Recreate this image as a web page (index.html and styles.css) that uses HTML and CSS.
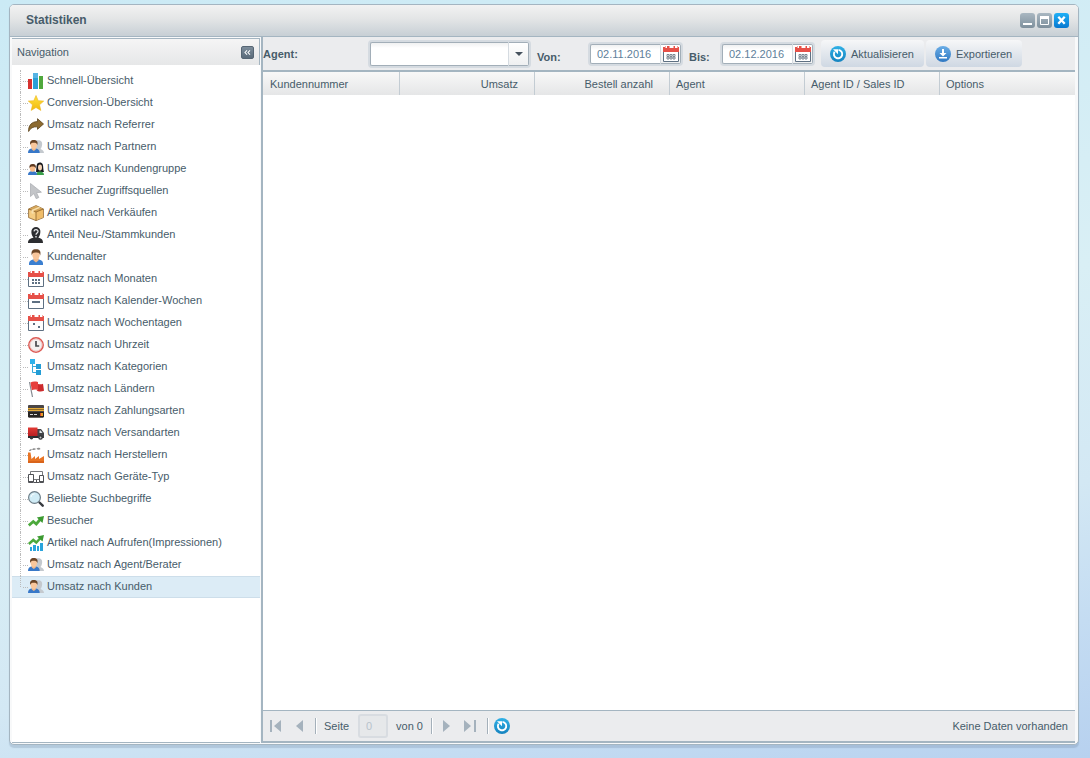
FILE: index.html
```html
<!DOCTYPE html>
<html lang="de">
<head>
<meta charset="utf-8">
<title>Statistiken</title>
<link rel="stylesheet" href="styles.css">
</head>
<body>
<svg class="sprite" aria-hidden="true">
  <defs>
    <linearGradient id="g-blue" x1="0" y1="0" x2="0" y2="1"><stop offset="0" stop-color="#2fb0e6"/><stop offset="1" stop-color="#1583bf"/></linearGradient>
    <linearGradient id="g-export" x1="0" y1="0" x2="0" y2="1"><stop offset="0" stop-color="#6aade6"/><stop offset="1" stop-color="#2f78c2"/></linearGradient>
    <linearGradient id="g-star" x1="0" y1="0" x2="0" y2="1"><stop offset="0" stop-color="#ffe240"/><stop offset="1" stop-color="#f2b90c"/></linearGradient>
    <linearGradient id="g-red" x1="0" y1="0" x2="0" y2="1"><stop offset="0" stop-color="#e23a35"/><stop offset="1" stop-color="#b81f22"/></linearGradient>
  </defs>
  <symbol id="i-bars" viewBox="0 0 16 16"><path fill="#d63230" d="M0 6h4v10H0z"/><path fill="#2a9fd8" d="M5 0h5v16H5z"/><path fill="#56b4e4" d="M5 0h5v5H5z"/><path fill="#4fa83d" d="M11 3h4v13h-4z"/></symbol>
  <symbol id="i-star" viewBox="0 0 16 16"><path fill="url(#g-star)" stroke="#edb51c" stroke-width=".6" d="M8 .5l2.200 5.200 5.500.4-4.200 3.700 1.300 5.600L8 12.500l-4.800 2.900 1.300-5.600L.3 6.100l5.500-.4z"/></symbol>
  <symbol id="i-share" viewBox="0 0 16 16"><path fill="#8c6a2f" stroke="#5c431a" stroke-width=".8" d="M.6 14.500C.3 8 4 4.600 9.500 4.600V1.700l6 5.300-6 5.300V9.800C5 9.600 2.500 11 .6 14.500z"/></symbol>
  <symbol id="i-user" viewBox="0 0 16 16"><path fill="#3b7fd0" d="M1 16c-.4-3 1-5 4-5.500h6c3 .5 4.500 2.500 4 5.500z"/><path fill="#f0b889" d="M5.500 9h5v2.500L8 13.500l-2.500-2z"/><ellipse cx="8" cy="6" rx="3.700" ry="4.600" fill="#f8c59a"/><path fill="#6b4526" d="M3.800 6.500C2.800 2 4.500.2 8 .2S13.300 2 12.200 6.500C11.700 4.200 11 3.500 8 3.500s-3.700.7-4.200 3z"/></symbol>
  <symbol id="i-users" viewBox="0 0 16 16"><path fill="#c4c9ce" d="M7 2.500C8 1 13 .5 14 3.500c.5 2-.2 5-1.500 6.500 2 .8 3.500 2 3.500 4H9z"/><path fill="#3878c8" d="M0 14c0-2.500 1-4 3.500-4.500h4.500c2.500.5 3.700 2 3.700 4.500z"/><path fill="#f0b889" d="M3.800 8.500h4v2L5.800 12l-2-1.500z"/><ellipse cx="5.800" cy="5.800" rx="3.200" ry="4.100" fill="#f9c79c"/><path fill="#6b4526" d="M2.300 6C1.500 2.500 2.800 1 5.800 1s4.500 1.500 3.500 5C8.900 4.200 8 3.700 5.800 3.700S2.800 4.200 2.300 6z"/></symbol>
  <symbol id="i-group" viewBox="0 0 16 16"><path fill="#16181c" d="M8 11c.5-2 0-8 2-9 1.500-1 4-.6 4.600 1C15.500 5 15 9 16 11z"/><path fill="#3aa04a" d="M8 14c.3-2.500 1.500-3.600 4-3.600s4 1.200 4 3.600z"/><ellipse cx="12" cy="6.500" rx="2" ry="3" fill="#f5d3b5"/><path fill="#3878c8" d="M0 14c0-2 1-3.300 3-3.700h3c2 .4 3 1.700 3 3.700z"/><ellipse cx="4.600" cy="7.600" rx="2.700" ry="3.200" fill="#f9bd8b"/><path fill="#5e3a20" d="M1.500 7.500C1 4.300 2.200 3 4.600 3s3.900 1.300 3.200 4.500C7.300 6 6.500 5.600 4.600 5.600S2 6 1.500 7.500z"/></symbol>
  <symbol id="i-cursor" viewBox="0 0 16 16"><path fill="#c3c5c8" stroke="#a6a9ad" stroke-width=".7" d="M2.500.5v13l3.400-2.900 2.300 5.100 2.600-1.200-2.300-4.800 4.900-.5z"/></symbol>
  <symbol id="i-box" viewBox="0 0 16 16"><path fill="#f5cd83" stroke="#8b5f27" stroke-width=".8" d="M.6 4L8 .6 15.400 4v8.600L8 15.600.6 12.600z"/><path fill="#efbd6b" d="M8 7l7-2.700v8L8 15.200z"/><path fill="#d3a458" d="M.8 4.200L8 7l7.200-2.800L8 1z"/><path fill="none" stroke="#8b5f27" stroke-width=".8" d="M.6 4L8 7l7.400-3M8 7v8.500"/><path fill="#f8e0ad" d="M10.500 1.900L3.500 5v3.200l2 .8V5.800l7-3z"/></symbol>
  <symbol id="i-unknown" viewBox="0 0 16 16"><path fill="#2c2d30" d="M0 16c0-3 1.500-4.500 5.500-5.300C3.800 8.500 3 6 3.500 3.500 4.200 1.200 5.700 0 8 0s3.800 1.200 4.300 3.500c.3 2.500-.3 5-1.900 7.200 3.600.8 4.600 2.300 4.600 5.300z"/><path fill="none" stroke="#e3e4e6" stroke-width="1.300" d="M6 4.300c.3-2.300 4.200-2 4 .2C9.900 6 8 6 8 7.800"/><path fill="#e3e4e6" d="M7.300 9h1.400v1.400H7.300z"/></symbol>
  <symbol id="i-cal" viewBox="0 0 16 16"><path fill="#fff" stroke="#5e7082" d="M.5 3.500h15v12H.5z"/><path fill="#e65048" d="M0 1h2v1h2V0h2v2h4V0h2v2h2V1h2v5H0z"/><path fill="#f6a69f" d="M2 0h1v2H2zM6 0h1v2H6zM10 0h1v2h-1zM14 0h1v2h-1z"/></symbol>
  <symbol id="i-month" viewBox="0 0 16 16"><use href="#i-cal"/><path fill="#5e7082" d="M4 8h2v2H4zM7 8h2v2H7zM10 8h2v2h-2zM4 11h2v2H4zM7 11h2v2H7zM10 11h2v2h-2z"/></symbol>
  <symbol id="i-week" viewBox="0 0 16 16"><use href="#i-cal"/><path fill="#5e7082" d="M4 8h8v2H4z"/></symbol>
  <symbol id="i-day" viewBox="0 0 16 16"><use href="#i-cal"/><path fill="#5e7082" d="M5 8h2v2H5zM10 11h2v2h-2z"/></symbol>
  <symbol id="i-picker" viewBox="0 0 16 16"><use href="#i-cal"/><path fill="none" stroke="#7d8893" stroke-width="1" d="M4 8.500h2v2H4zM7 8.500h2v2H7zM10 8.500h2v2h-2zM4 11h2v2H4zM7 11h2v2H7zM10 11h2v2h-2z"/></symbol>
  <symbol id="i-clock" viewBox="0 0 16 16"><circle cx="8" cy="8" r="7.200" fill="#f3f0f0" stroke="#dc5a54" stroke-width="1.500"/><circle cx="8" cy="8" r="6" fill="none" stroke="#efb5b1" stroke-width=".7"/><path fill="none" stroke="#47494e" stroke-width="1.700" d="M8 4v5h3.200"/></symbol>
  <symbol id="i-tree" viewBox="0 0 16 16"><path fill="#2fb2ea" d="M2 0h5v5H2z"/><path fill="#249dd5" d="M8 5h5v5H8zM8 11h5v5H8z"/><path fill="none" stroke="#36abdc" d="M4.500 5v8.500H8M4.500 7.500H8"/></symbol>
  <symbol id="i-flag" viewBox="0 0 16 16"><path stroke="#848a91" stroke-width="1.200" d="M1.500 1l3 15"/><path fill="#e6403d" d="M2.500 1.500C4.500.2 7 .2 10 .9V9C7.500 8.300 5.300 8.500 3.800 9.300z"/><path fill="#cc2a2c" d="M10 3c2 .6 3.700.4 5-.2l1 7c-2 1-4.500 1-6.500.2L8.300 8.700l1.700.3z"/></symbol>
  <symbol id="i-card" viewBox="0 0 16 16"><rect y="2" width="16" height="12.500" rx="1" fill="#4a4646"/><path fill="#262423" d="M0 9h16v4.500l-1 1H1l-1-1z"/><path fill="#e5ab37" d="M0 5h16v1H0zM0 7h16v1H0z"/><path fill="#8f6a26" d="M0 6h16v1H0z"/><path fill="#d9d9d9" d="M2 11h3v1H2zM6 11h3v1H6z"/><path fill="#e99b24" d="M12 10h3v3h-3z"/><path fill="#d8452c" d="M12 10h1v3h-1z"/></symbol>
  <symbol id="i-truck" viewBox="0 0 16 16"><path fill="#414347" d="M9 4h4l3 4v5H9z"/><path fill="#dfe4e8" d="M11.500 5.500h1.200L14.500 8h-3z"/><path fill="url(#g-red)" d="M0 2.500h9.500V11H0z"/><path fill="#292b2e" d="M0 11h10v2H0z"/><circle cx="3.500" cy="12.800" r="1.700" fill="#34363a"/><circle cx="12.500" cy="12.500" r="2.300" fill="#303236"/><circle cx="12.500" cy="12.500" r="1" fill="#c3c6c9"/></symbol>
  <symbol id="i-factory" viewBox="0 0 16 16"><path fill="#e87424" d="M0 16V5.500h2.500L3.500 12l3.500-3v3l4-3v3l5-3v7z"/><path fill="#d9641b" d="M0 14h16v2H0z"/><path fill="#8d8d8d" d="M1 4c.3-1.400 1.500-2 3-1.500-.5 1-1.500 1.700-3 1.500zM4 2.500C5 1 7 1 8 2 7 3.200 5.500 3.500 4 2.500zM8.500 1.800C9.500.3 12 .5 12.500 2c-1 1.100-3 1-4-.2z"/></symbol>
  <symbol id="i-devices" viewBox="0 0 16 16"><path fill="#fff" stroke="#77797d" d="M2.500 10.500v-8h12v8z"/><path stroke="#505256" d="M6 13.500h5M8.500 11v3"/><path fill="#fff" stroke="#505256" d="M.5 5.500h5v8h-5zM11.500 6.500h4v7h-4z"/><path stroke="#505256" d="M0 12.500h6M11 12.500h5"/></symbol>
  <symbol id="i-search" viewBox="0 0 16 16"><path stroke="#363a40" stroke-width="2.400" stroke-linecap="round" d="M11.500 11.500l3.200 3.200"/><circle cx="6.500" cy="6.500" r="5.900" fill="#d0ecf6" stroke="#6e7e88" stroke-width="1.200"/><path fill="none" stroke="#fff" d="M3 6c.3-1.800 1.500-3 3.500-3"/></symbol>
  <symbol id="i-trend" viewBox="0 0 16 16"><path fill="none" stroke="#4ca93c" stroke-width="2.800" d="M.8 12.500l4.500-4 3 2.500L13 5.500"/><path fill="#3c9a31" d="M8.800 4.500L16 3l-1.500 7z"/></symbol>
  <symbol id="i-impress" viewBox="0 0 16 16"><path fill="none" stroke="#4ca93c" stroke-width="2.500" d="M.8 9l4.500-4 3 2.500L13 2.500"/><path fill="#3c9a31" d="M9 1.500L16 0l-1.500 6.500z"/><path fill="#2aa4dc" d="M2 12h2v4H2zM5 10h3v6H5zM9 11h2v5H9zM12 8h3v8h-3z"/></symbol>
  <symbol id="i-refresh" viewBox="0 0 16 16"><circle cx="8" cy="8" r="8" fill="url(#g-blue)"/><path fill="none" stroke="#fff" stroke-width="1.900" d="M8.500 3.900A4.200 4.200 0 1 1 4.600 5.700"/><path fill="#fff" d="M3 3.200h5v5z"/></symbol>
  <symbol id="i-export" viewBox="0 0 16 16"><circle cx="8" cy="8" r="8" fill="url(#g-export)"/><path fill="#fff" d="M7 3h2v4h2.500L8 10.500 4.500 7H7zM4 11h8v1.400H4z"/></symbol>
</svg>

<main class="window">
  <header class="titlebar">
    <h1>Statistiken</h1>
    <button class="tool" aria-label="Minimieren"><svg viewBox="0 0 15 15"><path fill="#fff" d="M3 10h9v2H3z"/></svg></button>
    <button class="tool" aria-label="Maximieren"><svg viewBox="0 0 15 15"><path fill="none" stroke="#fff" d="M3.500 4.500h8v7h-8z"/><path fill="#fff" d="M3 3h9v3H3z"/></svg></button>
    <button class="tool close" aria-label="Schließen"><svg viewBox="0 0 15 15"><path stroke="#fff" stroke-width="2.300" d="M4.300 3.800l6.400 7M10.700 3.800l-6.400 7"/></svg></button>
  </header>
  <div class="content">
    <aside class="sidebar">
      <div class="side-head"><h2>Navigation</h2><button class="collapse" aria-label="Navigation einklappen"><svg viewBox="0 0 13 13"><path fill="none" stroke="#fff" stroke-width="1.200" d="M6 4L3.500 6.500 6 9M9.500 4L7 6.500 9.500 9"/></svg></button></div>
      <nav>
        <ul class="tree">
          <li><a href="#"><svg><use href="#i-bars"/></svg><span>Schnell-Übersicht</span></a></li>
          <li><a href="#"><svg><use href="#i-star"/></svg><span>Conversion-Übersicht</span></a></li>
          <li><a href="#"><svg><use href="#i-share"/></svg><span>Umsatz nach Referrer</span></a></li>
          <li><a href="#"><svg><use href="#i-users"/></svg><span>Umsatz nach Partnern</span></a></li>
          <li><a href="#"><svg><use href="#i-group"/></svg><span>Umsatz nach Kundengruppe</span></a></li>
          <li><a href="#"><svg><use href="#i-cursor"/></svg><span>Besucher Zugriffsquellen</span></a></li>
          <li><a href="#"><svg><use href="#i-box"/></svg><span>Artikel nach Verkäufen</span></a></li>
          <li><a href="#"><svg><use href="#i-unknown"/></svg><span>Anteil Neu-/Stammkunden</span></a></li>
          <li><a href="#"><svg><use href="#i-user"/></svg><span>Kundenalter</span></a></li>
          <li><a href="#"><svg><use href="#i-month"/></svg><span>Umsatz nach Monaten</span></a></li>
          <li><a href="#"><svg><use href="#i-week"/></svg><span>Umsatz nach Kalender-Wochen</span></a></li>
          <li><a href="#"><svg><use href="#i-day"/></svg><span>Umsatz nach Wochentagen</span></a></li>
          <li><a href="#"><svg><use href="#i-clock"/></svg><span>Umsatz nach Uhrzeit</span></a></li>
          <li><a href="#"><svg><use href="#i-tree"/></svg><span>Umsatz nach Kategorien</span></a></li>
          <li><a href="#"><svg><use href="#i-flag"/></svg><span>Umsatz nach Ländern</span></a></li>
          <li><a href="#"><svg><use href="#i-card"/></svg><span>Umsatz nach Zahlungsarten</span></a></li>
          <li><a href="#"><svg><use href="#i-truck"/></svg><span>Umsatz nach Versandarten</span></a></li>
          <li><a href="#"><svg><use href="#i-factory"/></svg><span>Umsatz nach Herstellern</span></a></li>
          <li><a href="#"><svg><use href="#i-devices"/></svg><span>Umsatz nach Geräte-Typ</span></a></li>
          <li><a href="#"><svg><use href="#i-search"/></svg><span>Beliebte Suchbegriffe</span></a></li>
          <li><a href="#"><svg><use href="#i-trend"/></svg><span>Besucher</span></a></li>
          <li><a href="#"><svg><use href="#i-impress"/></svg><span>Artikel nach Aufrufen(Impressionen)</span></a></li>
          <li><a href="#"><svg><use href="#i-users"/></svg><span>Umsatz nach Agent/Berater</span></a></li>
          <li class="selected"><a href="#" aria-current="page"><svg><use href="#i-users"/></svg><span>Umsatz nach Kunden</span></a></li>
        </ul>
      </nav>
    </aside>
    <section class="main">
      <div class="toolbar">
        <label class="agent-label" for="agent">Agent:</label>
        <div class="field combo"><input id="agent" type="text"><button class="trigger" aria-label="Agent wählen"><svg viewBox="0 0 18 20"><path fill="#46525e" d="M5 8h8l-4 4z"/></svg></button></div>
        <label class="date-label" for="from">Von:</label>
        <div class="field date"><input id="from" type="text" value="02.11.2016"><button class="trigger" aria-label="Datum von wählen"><svg><use href="#i-picker"/></svg></button></div>
        <label class="date-label" for="to">Bis:</label>
        <div class="field date"><input id="to" type="text" value="02.12.2016"><button class="trigger" aria-label="Datum bis wählen"><svg><use href="#i-picker"/></svg></button></div>
        <div class="actions">
          <button class="action"><svg><use href="#i-refresh"/></svg>Aktualisieren</button>
          <button class="action"><svg><use href="#i-export"/></svg>Exportieren</button>
        </div>
      </div>
      <div class="grid">
        <table>
          <thead><tr><th scope="col">Kundennummer</th><th scope="col" class="num">Umsatz</th><th scope="col" class="num">Bestell anzahl</th><th scope="col">Agent</th><th scope="col">Agent ID / Sales ID</th><th scope="col">Options</th></tr></thead>
          <tbody></tbody>
        </table>
      </div>
      <footer class="pager">
        <button class="page" aria-label="Erste Seite"><svg viewBox="0 0 16 16"><path d="M3 2h2v12H3zM14 2v12L7 8z"/></svg></button>
        <button class="page" aria-label="Vorherige Seite"><svg viewBox="0 0 16 16"><path d="M12 2v12L5 8z"/></svg></button>
        <span class="sep"></span>
        <label for="page">Seite</label>
        <input id="page" class="page-no" type="text" value="0" disabled>
        <span class="total">von 0</span>
        <span class="sep"></span>
        <button class="page" aria-label="Nächste Seite"><svg viewBox="0 0 16 16"><path d="M4 2v12l7-6z"/></svg></button>
        <button class="page" aria-label="Letzte Seite"><svg viewBox="0 0 16 16"><path d="M1 2v12l7-6zM11 2h2v12h-2z"/></svg></button>
        <span class="sep"></span>
        <button class="page reload" aria-label="Neu laden"><svg><use href="#i-refresh"/></svg></button>
        <span class="status">Keine Daten vorhanden</span>
      </footer>
    </section>
  </div>
</main>
</body>
</html>
```

FILE: styles.css
```css
* { box-sizing: border-box; }

body {
  margin: 0;
  min-height: 100vh;
  display: flex;
  padding: 4px 11px 13px 9px;
  background: linear-gradient(168deg, #cbeaf5 0%, #d9eff5 50%, #d3e8f4 72%, #c4dcf2 86%, #b7d1ef 100%);
  font: 11px/14px "Liberation Sans", Arial, sans-serif;
  color: #475c6a;
}

button, input { font: inherit; color: inherit; margin: 0; }
button { padding: 0; border: 0; background: none; cursor: pointer; }
svg { display: block; width: 16px; height: 16px; flex: none; }
h1, h2 { margin: 0; font-size: 11px; }

.sprite { position: absolute; width: 0; height: 0; }

.window {
  flex: 1;
  min-width: 0;
  display: flex;
  flex-direction: column;
  border: 1px solid #a4b5c1;
  border-radius: 5px;
  background: #f8f9fa;
  box-shadow: 0 3px 1px rgba(100, 125, 150, .25);
}

.titlebar {
  display: flex;
  align-items: center;
  gap: 2px;
  height: 32px;
  padding: 0 9px 0 16px;
  border-bottom: 1px solid #a4b5c1;
  border-radius: 4px 4px 0 0;
  background: linear-gradient(#f2f2f2, #e3e5e6 45%, #c7cfd5);
}
.titlebar h1 { flex: 1; font-size: 12px; padding-bottom: 2px; }

.tool {
  border-radius: 3px;
  background: linear-gradient(#a9b7c1, #7e909d);
}
.tool svg { width: 15px; height: 15px; }
.close { background: linear-gradient(#20b0f6, #0878d0); }

.content {
  flex: 1;
  display: flex;
  gap: 1px;
  padding: 0 3px 1px 2px;
}

.sidebar {
  flex: none;
  width: 248px;
  margin-top: 1px;
  background: #fff;
  border-bottom: 1px solid #a4b5c1;
}
.side-head {
  display: flex;
  align-items: center;
  justify-content: space-between;
  height: 27px;
  padding: 0 5px;
  border: solid #a4b5c1;
  border-width: 1px 1px 0 0;
  background: linear-gradient(#f5f5f5, #e6e7e8);
}
.side-head h2 { font-weight: normal; }
.collapse { border-radius: 2px; background: linear-gradient(#7d8d9b, #5a6b7a); border: 1px solid #566674; }
.collapse svg { width: 11px; height: 11px; }

.tree { list-style: none; margin: 0; padding: 5px 0 0; }
.tree li { display: flex; height: 22px; padding-left: 8px; }
.tree li::before {
  content: "";
  flex: none;
  width: 1px;
  border-left: 1px dotted #bbb;
}
.tree li:last-child::before { height: 11px; }
.tree a {
  display: flex;
  align-items: center;
  flex: 1;
  padding-left: 1px;
  color: inherit;
  text-decoration: none;
}
.tree a::before {
  content: "";
  flex: none;
  width: 5px;
  border-top: 1px dotted #bbb;
}
.tree span { padding: 0 0 2px 3px; }
.tree .selected {
  background: #dcecf6;
  box-shadow: inset 0 1px #cddeea, inset 0 -1px #cddeea;
}

.main {
  flex: 1;
  min-width: 0;
  display: flex;
  flex-direction: column;
  border: solid #a4b5c1;
  border-width: 0 0 2px 2px;
}

.toolbar {
  display: flex;
  align-items: center;
  height: 35px;
  border-bottom: 2px solid #a4b5c1;
  background: #ebecee;
}
.toolbar label { font-weight: bold; }
.agent-label { width: 105px; }
.date-label { padding: 6px 0 0 6px; width: 57px; }
.date ~ .date-label { width: 37px; }

.field {
  display: flex;
  flex: none;
  border: 2px solid #d5dbe1;
  border-radius: 4px;
  background: #fff;
}
.field input {
  min-width: 0;
  flex: 1;
  padding: 0 6px;
  border: 1px solid #a2aeb8;
  border-right: 0;
  border-radius: 2px 0 0 2px;
  background: linear-gradient(#f0f1f2, #fff 5px);
  color: #60809a;
}
.combo { width: 163px; height: 28px; }
.date { width: 95px; height: 24px; }
.trigger {
  width: 21px;
  display: grid;
  place-items: center;
  border: 1px solid #a2aeb8;
  border-left-color: #d5dbe1;
  border-radius: 0 2px 2px 0;
  background: linear-gradient(#fff, #eff0f1);
}
.combo .trigger svg { width: 18px; height: 20px; }

.actions { display: flex; gap: 2px; padding-left: 6px; }
.action {
  display: flex;
  align-items: center;
  gap: 5px;
  height: 27px;
  padding: 0 10px 0 9px;
  border-radius: 4px;
  background: linear-gradient(#f6f7f8, #e2e7ed 50%, #cfd8e3);
}

.grid { flex: 1; background: #fff; }
.grid table { width: 100%; table-layout: fixed; border-collapse: separate; border-spacing: 0; }
.grid th {
  height: 23px;
  padding: 0 16px 0 6px;
  border-right: 1px solid #c3ccd3;
  text-align: left;
  font-weight: normal;
  background: linear-gradient(#f8f8f8, #e5e6e7);
}
.grid th:first-child { width: 137px; padding-left: 7px; }
.grid th:last-child { border-right: 0; }
.grid .num { text-align: right; }

.pager {
  display: flex;
  align-items: center;
  height: 31px;
  padding: 0 7px 0 0;
  border-top: 1px solid #a4b5c1;
  background: #ebecee;
}
.page { padding: 0 4px; }
.page path { fill: #a5b2bd; }
.page + .sep { margin-left: 4px; }
.sep { width: 2px; height: 16px; border-left: 1px solid #a4b0ba; border-right: 1px solid #fff; }
.sep + .page { margin-left: 2px; }
.sep + .reload { padding: 0 3px; }
.pager label { padding: 0 9px 0 7px; }
.page-no {
  width: 30px;
  height: 24px;
  padding: 0 6px;
  border: 2px solid #d8dce1;
  border-radius: 3px;
  background: #e6e8ea;
  color: #b8c3cc;
}
.total { padding: 0 8px; }
.status { margin-left: auto; }
```
